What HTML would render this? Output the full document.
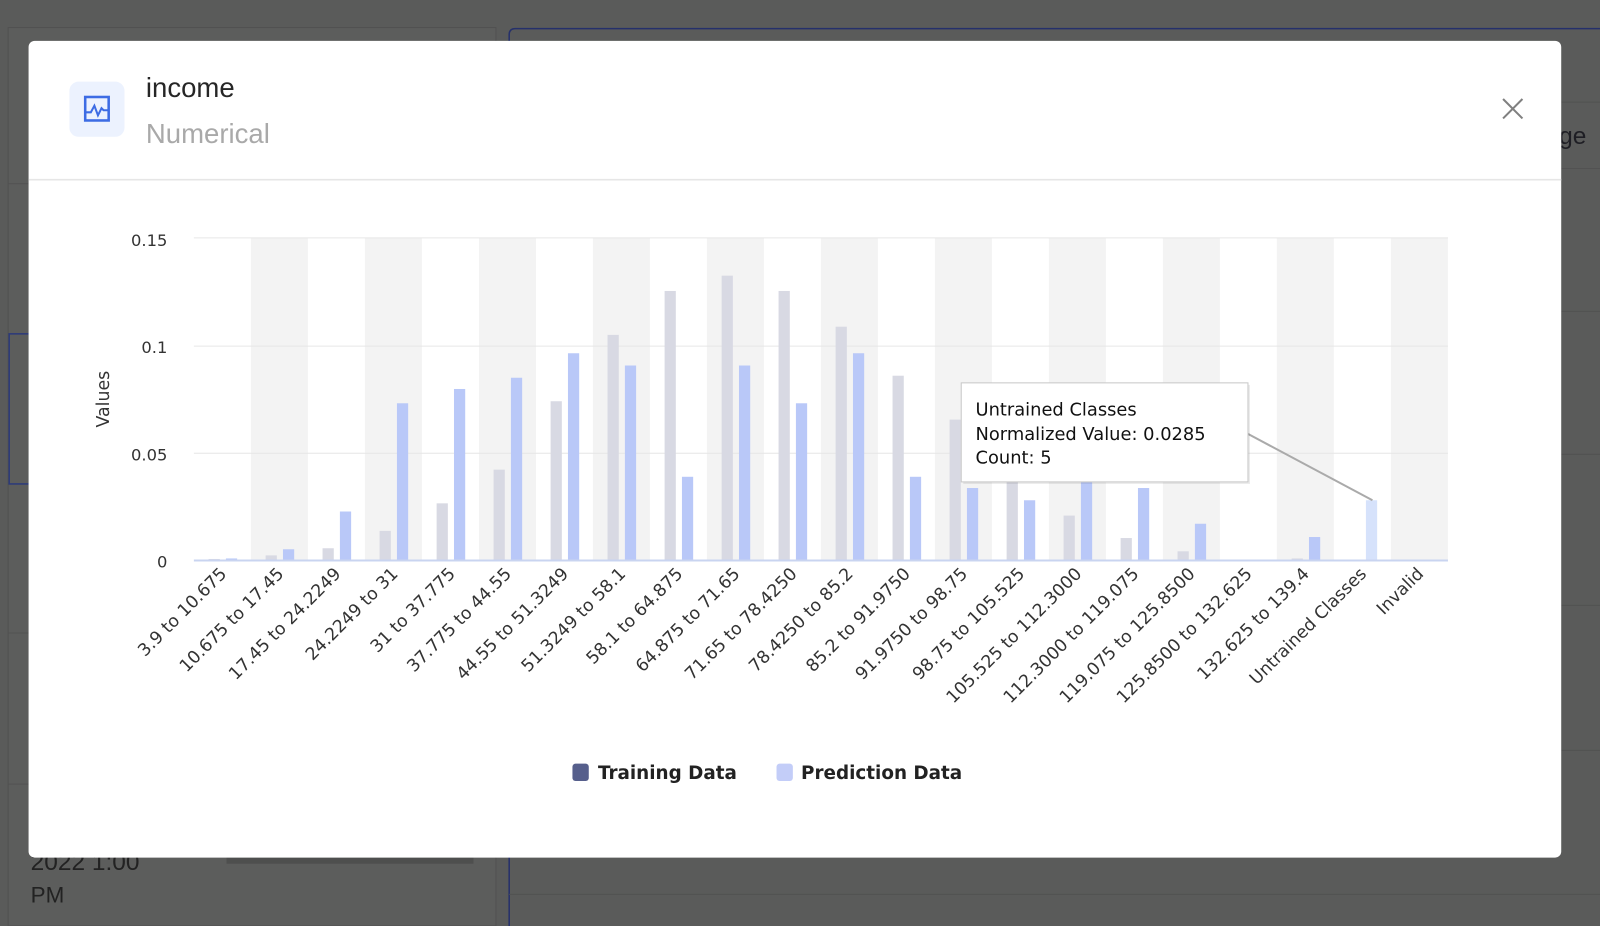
<!DOCTYPE html>
<html><head><meta charset="utf-8"><style>
html,body{margin:0;padding:0;width:1600px;height:926px;overflow:hidden;background:#5a5b5a;}
#w{width:1568px;height:907px;transform:scale(1.020408,1.020948);transform-origin:0 0;position:relative;font-family:"Liberation Sans",sans-serif;}
svg text{font-family:"Liberation Sans","DejaVu Sans",sans-serif;}
svg .dv{font-family:"DejaVu Sans",sans-serif;}
</style></head><body><div id="w">
<svg width="1568" height="907" viewBox="0 0 1568 907" xmlns="http://www.w3.org/2000/svg">
<rect width="1568" height="907" fill="#5a5b5a"/>
<rect x="8" y="27" width="478" height="880" fill="#5c5d5c" stroke="#515151"/>
<line x1="8" y1="180" x2="486" y2="180" stroke="#525252"/>
<line x1="8" y1="620" x2="486" y2="620" stroke="#525252"/>
<line x1="8" y1="768" x2="486" y2="768" stroke="#525252"/>
<rect x="9" y="327" width="20" height="147" fill="none" stroke="#2c3a7a" stroke-width="1.5"/>
<path d="M499 907 V34 Q499 28 505 28 H1568" fill="none" stroke="#25306b" stroke-width="1.5"/>
<line x1="499" y1="876" x2="1568" y2="876" stroke="#525252"/>
<line x1="1530" y1="100" x2="1568" y2="100" stroke="#525252"/>
<line x1="1530" y1="165" x2="1568" y2="165" stroke="#525252"/>
<line x1="1530" y1="305" x2="1568" y2="305" stroke="#525252"/>
<line x1="1530" y1="445" x2="1568" y2="445" stroke="#525252"/>
<line x1="1530" y1="593" x2="1568" y2="593" stroke="#525252"/>
<line x1="1530" y1="735" x2="1568" y2="735" stroke="#525252"/>
<text x="1528" y="141" font-size="24" fill="#1e1e24">ge</text>
<rect x="222" y="838" width="242" height="8" fill="#4e4f4e"/>
<text x="30" y="852" font-size="24" fill="#222">2022 1:00</text>
<text x="30" y="884" font-size="22" fill="#222">PM</text>

<rect x="28" y="40" width="1502" height="800" rx="6" fill="#fff"/>
<rect x="68" y="80" width="54" height="54" rx="9" fill="#ecf2fe"/>
<rect x="83.5" y="95" width="23" height="23" fill="none" stroke="#3d6ce4" stroke-width="2.5"/>
<path d="M84 110 H89 L92.5 103.5 L96 113 L99.5 106 L101.5 108 H106" fill="none" stroke="#3d6ce4" stroke-width="2"/>
<text x="143" y="95" font-size="27" fill="#262626">income</text>
<text x="143" y="140" font-size="27" fill="#a9a9a9">Numerical</text>
<path d="M1473 97 L1492 116 M1492 97 L1473 116" stroke="#808080" stroke-width="2"/>
<line x1="28" y1="176" x2="1530" y2="176" stroke="#e6e6e6" stroke-width="1.5"/>

<g fill="#f3f3f3">
<rect x="245.9" y="233" width="55.86" height="316"/>
<rect x="357.6" y="233" width="55.86" height="316"/>
<rect x="469.4" y="233" width="55.86" height="316"/>
<rect x="581.1" y="233" width="55.86" height="316"/>
<rect x="692.8" y="233" width="55.86" height="316"/>
<rect x="804.5" y="233" width="55.86" height="316"/>
<rect x="916.2" y="233" width="55.86" height="316"/>
<rect x="1027.9" y="233" width="55.86" height="316"/>
<rect x="1139.6" y="233" width="55.86" height="316"/>
<rect x="1251.3" y="233" width="55.86" height="316"/>
<rect x="1363.1" y="233" width="55.86" height="316"/>
</g>
<g stroke="#e6e6e6" stroke-width="1">
<line x1="190" y1="233" x2="1419" y2="233"/>
<line x1="190" y1="339" x2="1419" y2="339"/>
<line x1="190" y1="444" x2="1419" y2="444"/>
</g>
<g class="dv" font-size="16" fill="#333" text-anchor="end">
<text class="dv" x="164" y="241">0.15</text>
<text class="dv" x="164" y="346">0.1</text>
<text class="dv" x="164" y="451">0.05</text>
<text class="dv" x="164" y="556">0</text>
</g>
<text class="dv" transform="translate(107,391) rotate(-90)" font-size="17" fill="#333" text-anchor="middle">Values</text>

<g fill="#d8d9e3">
<rect x="204.4" y="547.5" width="11" height="1.5"/>
<rect x="260.3" y="544" width="11" height="5"/>
<rect x="316.1" y="537" width="11" height="12"/>
<rect x="372" y="520" width="11" height="29"/>
<rect x="427.9" y="493" width="11" height="56"/>
<rect x="483.7" y="460" width="11" height="89"/>
<rect x="539.6" y="393" width="11" height="156"/>
<rect x="595.4" y="328" width="11" height="221"/>
<rect x="651.3" y="285" width="11" height="264"/>
<rect x="707.2" y="270" width="11" height="279"/>
<rect x="763" y="285" width="11" height="264"/>
<rect x="818.9" y="320" width="11" height="229"/>
<rect x="874.7" y="368" width="11" height="181"/>
<rect x="930.6" y="411" width="11" height="138"/>
<rect x="986.5" y="445" width="11" height="104"/>
<rect x="1042.3" y="505" width="11" height="44"/>
<rect x="1098.2" y="527" width="11" height="22"/>
<rect x="1154" y="540" width="11" height="9"/>
<rect x="1265.8" y="547" width="11" height="2"/>
</g>
<g fill="#b9c8f8">
<rect x="221.4" y="547" width="11" height="2"/>
<rect x="277.3" y="538" width="11" height="11"/>
<rect x="333.1" y="501" width="11" height="48"/>
<rect x="389" y="395" width="11" height="154"/>
<rect x="444.9" y="381" width="11" height="168"/>
<rect x="500.7" y="370" width="11" height="179"/>
<rect x="556.6" y="346" width="11" height="203"/>
<rect x="612.4" y="358" width="11" height="191"/>
<rect x="668.3" y="467" width="11" height="82"/>
<rect x="724.2" y="358" width="11" height="191"/>
<rect x="780" y="395" width="11" height="154"/>
<rect x="835.9" y="346" width="11" height="203"/>
<rect x="891.7" y="467" width="11" height="82"/>
<rect x="947.6" y="478" width="11" height="71"/>
<rect x="1003.5" y="490" width="11" height="59"/>
<rect x="1059.3" y="440" width="11" height="109"/>
<rect x="1115.2" y="478" width="11" height="71"/>
<rect x="1171" y="513" width="11" height="36"/>
<rect x="1282.8" y="526" width="11" height="23"/>
</g>
<rect x="1338.6" y="490" width="11" height="59" fill="#d6e2fb"/>
<line x1="190" y1="549" x2="1419" y2="549" stroke="#c9d4f0" stroke-width="2"/>

<g font-size="17" fill="#333" text-anchor="end">
<text class="dv" transform="translate(223,563) rotate(-45)">3.9 to 10.675</text>
<text class="dv" transform="translate(279,563) rotate(-45)">10.675 to 17.45</text>
<text class="dv" transform="translate(335,563) rotate(-45)">17.45 to 24.2249</text>
<text class="dv" transform="translate(391,563) rotate(-45)">24.2249 to 31</text>
<text class="dv" transform="translate(447,563) rotate(-45)">31 to 37.775</text>
<text class="dv" transform="translate(502,563) rotate(-45)">37.775 to 44.55</text>
<text class="dv" transform="translate(558,563) rotate(-45)">44.55 to 51.3249</text>
<text class="dv" transform="translate(614,563) rotate(-45)">51.3249 to 58.1</text>
<text class="dv" transform="translate(670,563) rotate(-45)">58.1 to 64.875</text>
<text class="dv" transform="translate(726,563) rotate(-45)">64.875 to 71.65</text>
<text class="dv" transform="translate(782,563) rotate(-45)">71.65 to 78.4250</text>
<text class="dv" transform="translate(837,563) rotate(-45)">78.4250 to 85.2</text>
<text class="dv" transform="translate(893,563) rotate(-45)">85.2 to 91.9750</text>
<text class="dv" transform="translate(949,563) rotate(-45)">91.9750 to 98.75</text>
<text class="dv" transform="translate(1005,563) rotate(-45)">98.75 to 105.525</text>
<text class="dv" transform="translate(1061,563) rotate(-45)">105.525 to 112.3000</text>
<text class="dv" transform="translate(1117,563) rotate(-45)">112.3000 to 119.075</text>
<text class="dv" transform="translate(1172,563) rotate(-45)">119.075 to 125.8500</text>
<text class="dv" transform="translate(1228,563) rotate(-45)">125.8500 to 132.625</text>
<text class="dv" transform="translate(1284,563) rotate(-45)">132.625 to 139.4</text>
<text class="dv" transform="translate(1340,563) rotate(-45)">Untrained Classes</text>
<text class="dv" transform="translate(1396,563) rotate(-45)">Invalid</text>
</g>

<rect x="561" y="748" width="16" height="17" rx="3" fill="#565f8c"/>
<text class="dv" x="586" y="763" font-size="18" font-weight="bold" fill="#222">Training Data</text>
<rect x="761" y="748" width="16" height="17" rx="3" fill="#c3cdf8"/>
<text class="dv" x="785" y="763" font-size="18" font-weight="bold" fill="#222">Prediction Data</text>

<line x1="1223" y1="425" x2="1345" y2="490" stroke="#aaa" stroke-width="2"/>
<rect x="944" y="377" width="281" height="97" fill="#000" opacity="0.08"/>
<rect x="942" y="375" width="281" height="97" fill="#fff" stroke="#c8c8c8"/>
<g font-size="17.5" fill="#111">
<text class="dv" x="956" y="407">Untrained Classes</text>
<text class="dv" x="956" y="431">Normalized Value: 0.0285</text>
<text class="dv" x="956" y="454">Count: 5</text>
</g>
</svg>
</div></body></html>
